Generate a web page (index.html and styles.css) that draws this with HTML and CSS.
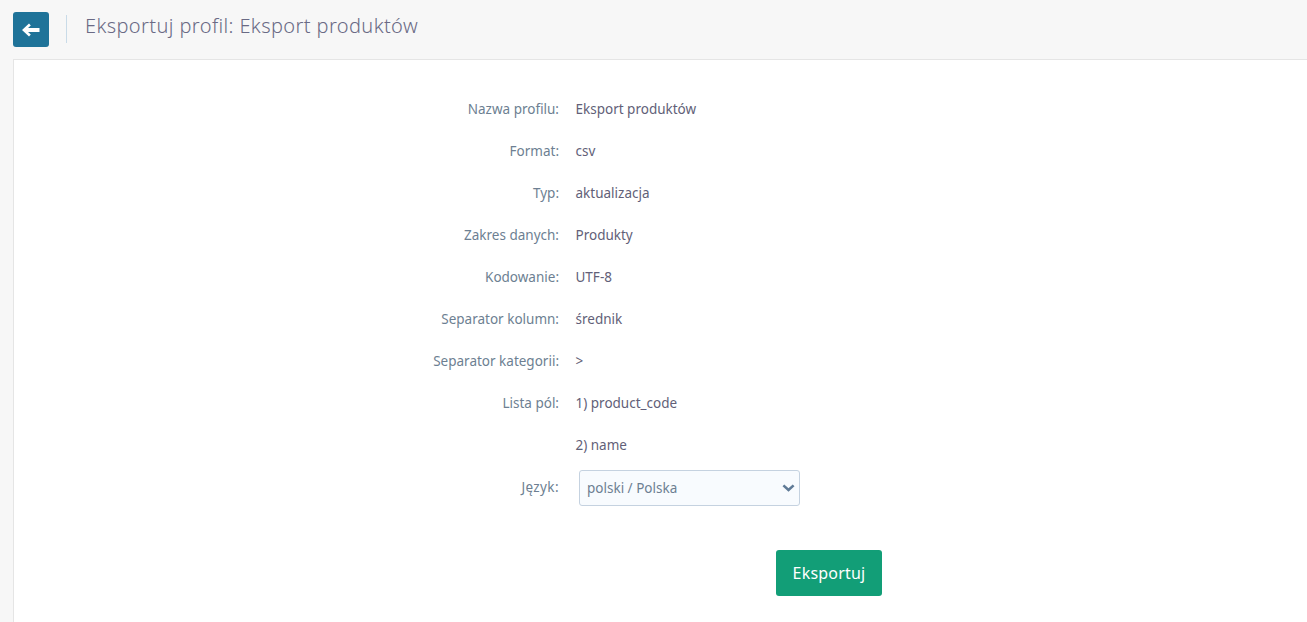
FILE: index.html
```html
<!DOCTYPE html>
<html lang="pl">
<head>
<meta charset="utf-8">
<title>Eksportuj profil</title>
<link rel="stylesheet" href="styles.css">
</head>
<body>
<header class="topbar">
  <a class="back" href="#" aria-label="Wstecz">
    <svg width="18" height="14" viewBox="0 0 18 14"><path d="M0 7 L7 0.6 L8.8 2.4 L6 5 H17.5 V9 H6 L8.8 11.6 L7 13.4 Z" fill="#fff"/></svg>
  </a>
  <span class="divider"></span>
  <h1 class="title">Eksportuj profil: Eksport produktów</h1>
</header>
<main class="panel">
  <dl class="details">
    <dt>Nazwa profilu:</dt><dd>Eksport produktów</dd>
    <dt>Format:</dt><dd>csv</dd>
    <dt>Typ:</dt><dd>aktualizacja</dd>
    <dt>Zakres danych:</dt><dd>Produkty</dd>
    <dt>Kodowanie:</dt><dd>UTF-8</dd>
    <dt>Separator kolumn:</dt><dd>średnik</dd>
    <dt>Separator kategorii:</dt><dd>&gt;</dd>
    <dt>Lista pól:</dt><dd>1) product_code</dd>
    <dt></dt><dd>2) name</dd>
  </dl>
  <div class="lang-row">
    <label class="lang-label">Język:</label>
    <div class="select">
      <span>polski / Polska</span>
      <svg width="13" height="8" viewBox="0 0 13 8"><path d="M1.4 1.4 L6.5 6 L11.6 1.4" fill="none" stroke="#5f7a96" stroke-width="2.6"/></svg>
    </div>
  </div>
  <div class="actions"><button class="submit" type="button">Eksportuj</button></div>
</main>
</body>
</html>
```
FILE: styles.css
```css
* { box-sizing: border-box; }
html, body { margin: 0; height: 100%; }
body {
  background: #f7f7f7;
  font-family: "Noto Sans", "Open Sans", sans-serif;
  font-size: 14px;
  color: #5c5a72;
  overflow: hidden;
}
.topbar {
  height: 59px;
  display: flex;
  align-items: center;
  padding: 0 0 5px 13px;
}
.back {
  width: 36px;
  height: 35px;
  background: #1f7399;
  border-radius: 3px;
  display: flex;
  align-items: center;
  justify-content: center;
  margin-top: 5px;
}
.divider {
  width: 1px;
  height: 28px;
  background: #c9dbe8;
  margin: 4px 18px 0 17px;
}
.title {
  margin: -3px 0 0;
  font-size: 20px;
  font-weight: 300;
  letter-spacing: 0.39px;
  color: #6a6a85;
}
.panel {
  margin-left: 13px;
  height: 563px;
  background: #fff;
  border-top: 1px solid #e5e5e5;
  border-left: 1px solid #e5e5e5;
  padding-top: 28px;
}
.details {
  margin: 0;
  display: grid;
  grid-template-columns: 545px 1fr;
  grid-auto-rows: 42px;
  align-items: center;
}
.details dt, .lang-label {
  text-align: right;
  color: #6d7f92;
  font-size: 13.5px;
}
.details dd {
  margin: 0 0 0 16.5px;
  color: #625f78;
  font-size: 13.5px;
}
.lang-row {
  display: flex;
  align-items: center;
  height: 36px;
  margin-top: 4px;
}
.lang-label { width: 545px; margin-top: -2px; letter-spacing: 0.4px; }
.select {
  margin-left: 20px;
  width: 221px;
  height: 36px;
  border: 1px solid #c5d2e0;
  border-radius: 3px;
  background: #f8fbfe;
  display: flex;
  align-items: center;
  justify-content: space-between;
  padding: 0 4px 0 7px;
  color: #6d7f92;
  font-size: 13.5px;
}
.actions {
  margin: 44px 0 0 762px;
}
.submit {
  width: 106px;
  height: 46px;
  border: 0;
  border-radius: 3px;
  background: #129e77;
  color: #fff;
  font: 16px "Noto Sans", "Open Sans", sans-serif;
  letter-spacing: 0.2px;
  display: block;
}
```
